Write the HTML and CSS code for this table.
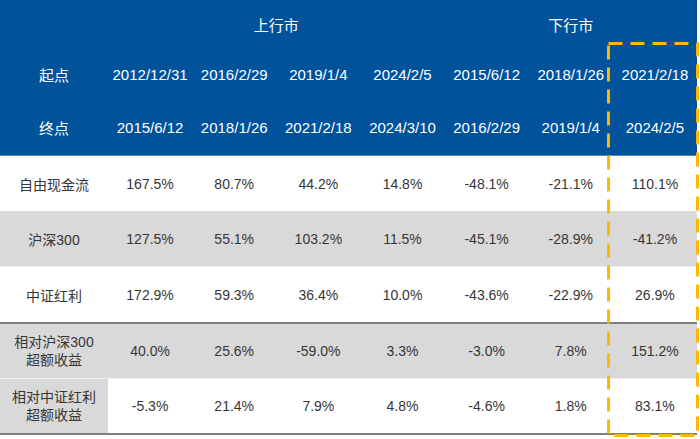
FILE: index.html
```html
<!DOCTYPE html>
<html lang="zh-CN">
<head>
<meta charset="utf-8">
<title>自由现金流 区间收益</title>
<link rel="stylesheet" href="styles.css">
</head>
<body>
<div class="wrap">
  <table class="grid">
    <colgroup>
      <col class="c-label">
      <col><col><col><col><col><col><col>
    </colgroup>
    <thead>
      <tr class="h-market">
        <th></th>
        <th colspan="4">上行市</th>
        <th colspan="3">下行市</th>
      </tr>
      <tr class="h-start">
        <th>起点</th>
        <th>2012/12/31</th><th>2016/2/29</th><th>2019/1/4</th><th>2024/2/5</th>
        <th>2015/6/12</th><th>2018/1/26</th><th>2021/2/18</th>
      </tr>
      <tr class="h-end">
        <th>终点</th>
        <th>2015/6/12</th><th>2018/1/26</th><th>2021/2/18</th><th>2024/3/10</th>
        <th>2016/2/29</th><th>2019/1/4</th><th>2024/2/5</th>
      </tr>
    </thead>
    <tbody>
      <tr class="r-white">
        <td>自由现金流</td>
        <td>167.5%</td><td>80.7%</td><td>44.2%</td><td>14.8%</td>
        <td>-48.1%</td><td>-21.1%</td><td>110.1%</td>
      </tr>
      <tr class="r-gray">
        <td>沪深300</td>
        <td>127.5%</td><td>55.1%</td><td>103.2%</td><td>11.5%</td>
        <td>-45.1%</td><td>-28.9%</td><td>-41.2%</td>
      </tr>
      <tr class="r-white r-sep">
        <td>中证红利</td>
        <td>172.9%</td><td>59.3%</td><td>36.4%</td><td>10.0%</td>
        <td>-43.6%</td><td>-22.9%</td><td>26.9%</td>
      </tr>
      <tr class="r-gray r-two">
        <td>相对沪深300<br>超额收益</td>
        <td>40.0%</td><td>25.6%</td><td>-59.0%</td><td>3.3%</td>
        <td>-3.0%</td><td>7.8%</td><td>151.2%</td>
      </tr>
      <tr class="r-white r-two r-last">
        <td class="lab-gray">相对中证红利<br>超额收益</td>
        <td>-5.3%</td><td>21.4%</td><td>7.9%</td><td>4.8%</td>
        <td>-4.6%</td><td>1.8%</td><td>83.1%</td>
      </tr>
    </tbody>
  </table>
  <svg class="highlight" width="94" height="396" viewBox="0 0 94 396" aria-hidden="true">
    <rect x="1.5" y="1.5" width="89" height="392" fill="none" stroke="#FFB800" stroke-width="3" stroke-dasharray="14 8"/>
  </svg>
</div>
</body>
</html>
```
FILE: styles.css
```css
html, body {
  margin: 0;
  padding: 0;
  background: #ffffff;
}

.wrap {
  position: relative;
  width: 700px;
  height: 439px;
  overflow: hidden;
  font-family: "Liberation Sans", "Noto Sans CJK SC", sans-serif;
  font-size: 14px;
}

.grid {
  width: 697px;
  border-collapse: collapse;
  table-layout: fixed;
}

.c-label {
  width: 108px;
}

.grid th,
.grid td {
  padding: 0;
  text-align: center;
  vertical-align: middle;
  white-space: nowrap;
}

.grid thead {
  background: #00529B;
  color: #ffffff;
}

.grid th {
  font-weight: normal;
  font-size: 15px;
}

.h-market th {
  height: 49px;
  padding-top: 0;
}

.h-start th {
  height: 51px;
}

.h-end th {
  height: 55px;
  border-bottom: 1px solid #4f86c0;
}

.grid td {
  color: #363636;
  height: 55px;
}

.r-white td {
  background: #ffffff;
}

.r-gray td {
  background: #D9D9D9;
}

.r-gray + .r-white td {
  border-top: 1px solid #f0f0f0;
}

.r-sep td {
  border-bottom: 2px solid #7f7f7f;
}

.r-two td {
  height: 54px;
  line-height: 18px;
}

.r-last td {
  border-bottom: 2px solid #7f7f7f;
}

.r-last td.lab-gray {
  background: #D9D9D9;
}

.highlight {
  position: absolute;
  left: 607px;
  top: 42px;
}
```
